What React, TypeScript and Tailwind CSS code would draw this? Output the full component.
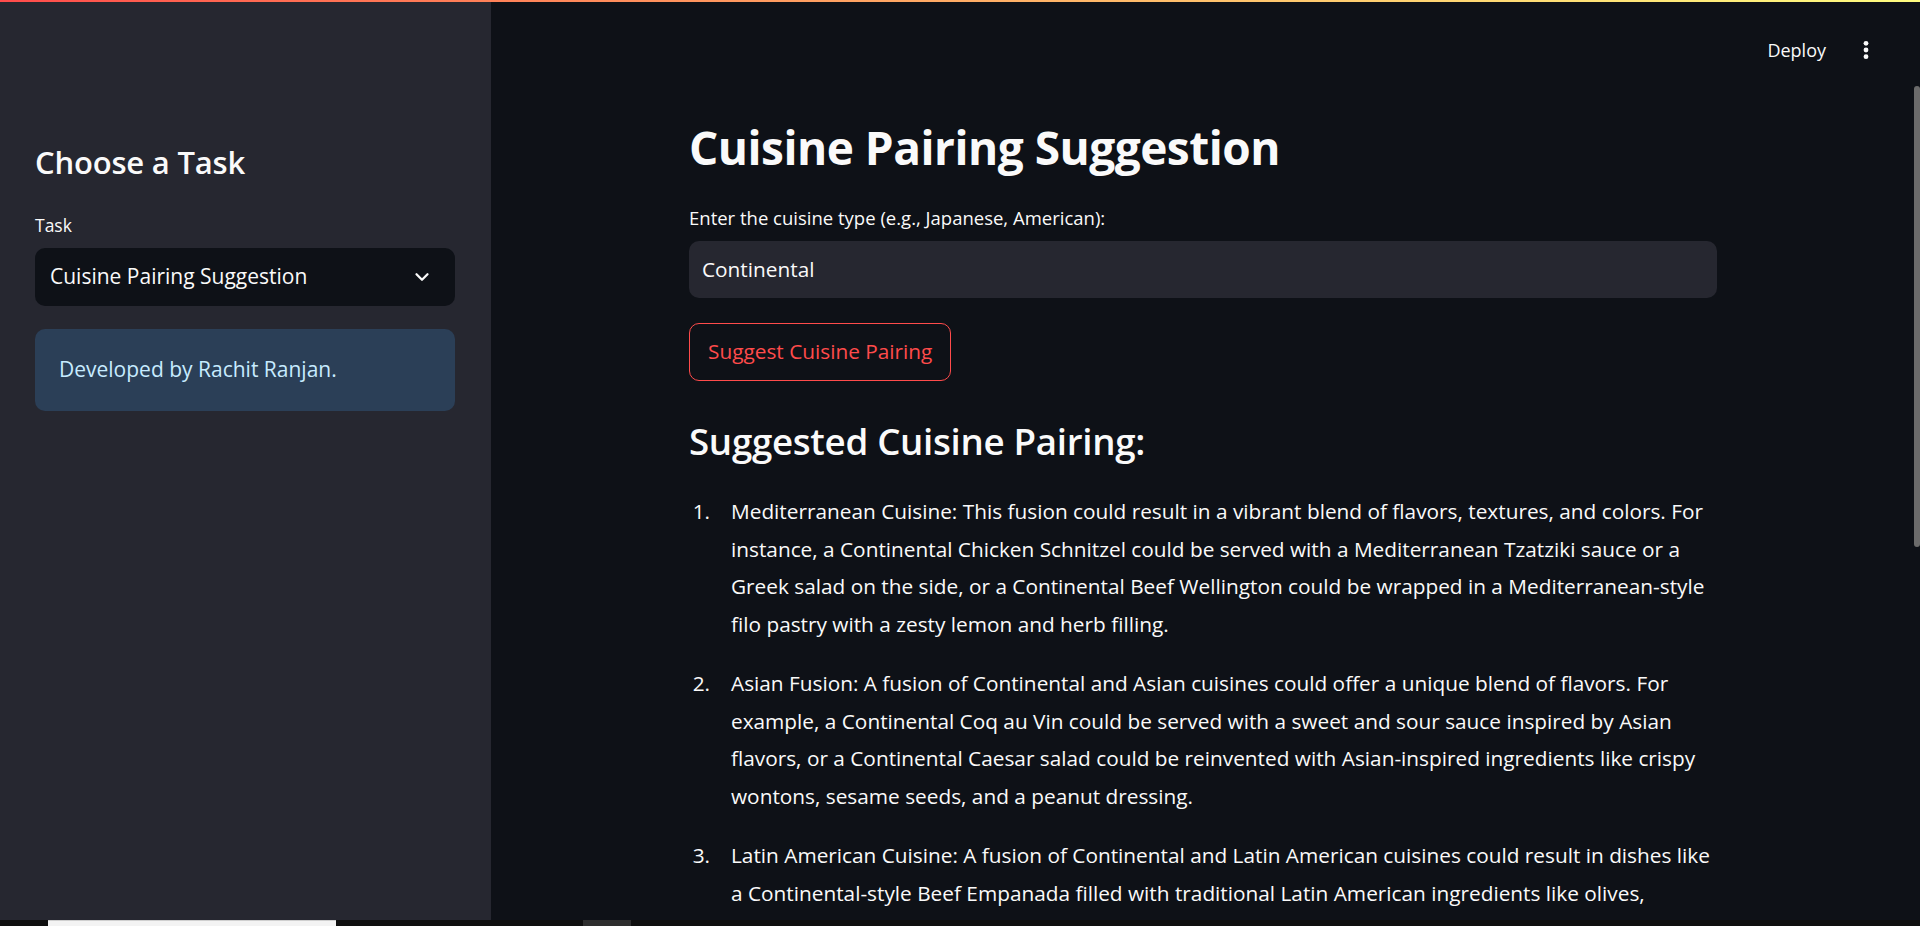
import React from "react";
import { ChevronDown } from "lucide-react";

const items: string[][] = [
  [
    "Mediterranean Cuisine: This fusion could result in a vibrant blend of flavors, textures, and colors. For",
    "instance, a Continental Chicken Schnitzel could be served with a Mediterranean Tzatziki sauce or a",
    "Greek salad on the side, or a Continental Beef Wellington could be wrapped in a Mediterranean-style",
    "filo pastry with a zesty lemon and herb filling.",
  ],
  [
    "Asian Fusion: A fusion of Continental and Asian cuisines could offer a unique blend of flavors. For",
    "example, a Continental Coq au Vin could be served with a sweet and sour sauce inspired by Asian",
    "flavors, or a Continental Caesar salad could be reinvented with Asian-inspired ingredients like crispy",
    "wontons, sesame seeds, and a peanut dressing.",
  ],
  [
    "Latin American Cuisine: A fusion of Continental and Latin American cuisines could result in dishes like",
    "a Continental-style Beef Empanada filled with traditional Latin American ingredients like olives,",
  ],
];

export default function App() {
  return (
    <div
      className="w-[1920px] h-[926px] overflow-hidden flex flex-col bg-[#0e1117] text-[#fafafa]"
      style={{ fontFamily: '"Open Sans", "Noto Sans", sans-serif' }}
    >
      <div className="relative flex h-[920px] shrink-0 overflow-hidden">
        <div className="absolute left-0 top-0 right-0 h-[2px] bg-gradient-to-r from-[#ff4b4b] to-[#fffd80] z-10" />
        {/* Sidebar */}
        <aside className="w-[491px] shrink-0 bg-[#262730] px-[35px] pt-[141px]">
          <h2 className="text-[31px] leading-[42px] font-semibold tracking-[-0.2px]">Choose a Task</h2>
          <div className="mt-[30px] text-[17.5px] leading-[24px]">Task</div>
          <div className="mt-[11px] h-[58px] w-[420px] rounded-[10px] bg-[#0e1117] flex items-center justify-between pl-[15px] pr-[22px]">
            <span className="text-[21px]">Cuisine Pairing Suggestion</span>
            <ChevronDown size={22} strokeWidth={2.5} className="text-[#fafafa]" />
          </div>
          <div className="mt-[23px] h-[82px] w-[420px] rounded-[10px] bg-[#2b3f57] flex items-center pl-[24px]">
            <span className="text-[21px] text-[#c7ebff]">Developed by Rachit Ranjan.</span>
          </div>
        </aside>
        {/* Main */}
        <main className="relative flex-1 flex flex-col">
          <div className="h-[100px] shrink-0 flex items-center justify-end pr-[44px] gap-[30px]">
            <span className="text-[18px]">Deploy</span>
            <svg width="20" height="24" viewBox="0 0 20 24" fill="#fafafa">
              <circle cx="10" cy="5.3" r="2.4" />
              <circle cx="10" cy="12" r="2.4" />
              <circle cx="10" cy="18.7" r="2.4" />
            </svg>
          </div>
          <div className="absolute right-0 top-[86px] w-[6px] h-[461px] rounded-[3px] bg-[#6b6b6b]" />
          <div className="pl-[198px] w-[1226px] shrink-0">
            <h1 className="mt-[17px] text-[46px] leading-[60px] font-bold tracking-[-0.5px]">
              Cuisine Pairing Suggestion
            </h1>
            <div className="mt-[29px] text-[18.5px] leading-[24px]">
              Enter the cuisine type (e.g., Japanese, American):
            </div>
            <div className="mt-[11px] h-[57px] rounded-[10px] bg-[#262730] flex items-center pl-[13px]">
              <span className="text-[20.8px]">Continental</span>
            </div>
            <button className="mt-[25px] h-[58px] px-[18px] rounded-[10px] border border-[#ff4b4b] text-[#ff4b4b] text-[20.8px] flex items-center">
              Suggest Cuisine Pairing
            </button>
            <h3 className="mt-[37px] text-[36.7px] leading-[47px] font-semibold tracking-[-0.3px]">
              Suggested Cuisine Pairing:
            </h3>
            <ol className="mt-[28px] flex flex-col gap-[22px]">
              {items.map((lines, i) => (
                <li key={i} className="flex">
                  <span className="w-[42px] shrink-0 text-right pr-[21px] text-[20.8px] leading-[37.5px]">
                    {i + 1}.
                  </span>
                  <div className="flex flex-col">
                    {lines.map((l, j) => (
                      <span key={j} className="whitespace-nowrap text-[20.8px] leading-[37.5px]">
                        {l}
                      </span>
                    ))}
                  </div>
                </li>
              ))}
            </ol>
          </div>
        </main>
      </div>
      <div className="relative h-[6px] shrink-0 bg-[#0f0f0f] flex">
        <div className="ml-[48px] w-[288px] h-[6px] bg-[#f3f3f3] border-t border-[#cfcfcf]" />
        <div className="ml-[247px] w-[48px] h-[6px] bg-[#2e2e2e]" />
      </div>
    </div>
  );
}
